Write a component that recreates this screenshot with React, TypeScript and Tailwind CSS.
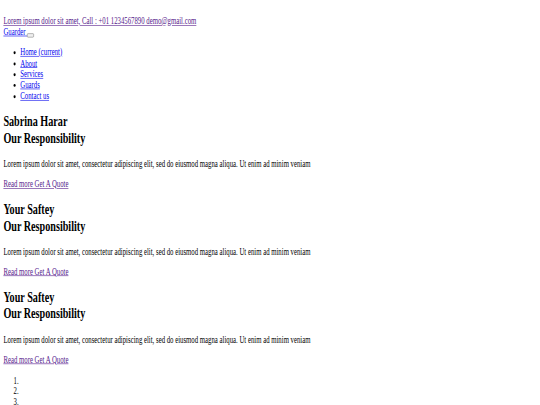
const slides = [
  { top: 'Sabrina Harar', bottom: 'Our Responsibility' },
  { top: 'Your Saftey', bottom: 'Our Responsibility' },
  { top: 'Your Saftey', bottom: 'Our Responsibility' }
];

const navItems = ['Home (current)', 'About', 'Services', 'Guards', 'Contact us'];

export default function App() {
  return (
    <div className="w-[540px] h-[405px] overflow-hidden bg-white">
      <div className="w-[1280px] origin-top-left scale-x-[0.423] scale-y-[0.595] p-2 font-['Liberation_Serif',serif] text-[16px] leading-[1.15] text-black">
        <div className="pt-[18.5px]">
          <a href="#" className="text-[#551a8b] underline">
            Lorem ipsum dolor sit amet, Call : +01 1234567890 demo@gmail.com
          </a>
        </div>
        <div>
          <a href="#" className="text-[#0000ee] underline">Guarder </a>
          <button className="inline-block align-[-3px] w-[16px] h-[7px] border border-[#767676] bg-[#efefef] rounded-[2px]"></button>
        </div>
        <ul className="my-4 pl-10 list-disc">
          {navItems.map((item, idx) => (
            <li key={idx}>
              <a href="#" className="text-[#0000ee] underline">{item}</a>
            </li>
          ))}
        </ul>

        {slides.map((slide, idx) => (
          <div key={idx}>
            <h2 className="my-[19.92px] text-[24px] font-bold">
              <span className="block">{slide.top}</span>
              <span className="block">{slide.bottom}</span>
            </h2>
            <p className="my-4">
              Lorem ipsum dolor sit amet, consectetur adipiscing elit, sed do eiusmod magna aliqua. Ut enim ad minim veniam
            </p>
            <p className="my-4">
              <a href="#" className="text-[#551a8b] underline">Read more Get A Quote</a>
            </p>
          </div>
        ))}

        <ol className="my-4 pl-10 list-decimal">
          <li className="h-[18.4px]"></li>
          <li className="h-[18.4px]"></li>
          <li className="h-[18.4px]"></li>
        </ol>
      </div>
    </div>
  );
}
